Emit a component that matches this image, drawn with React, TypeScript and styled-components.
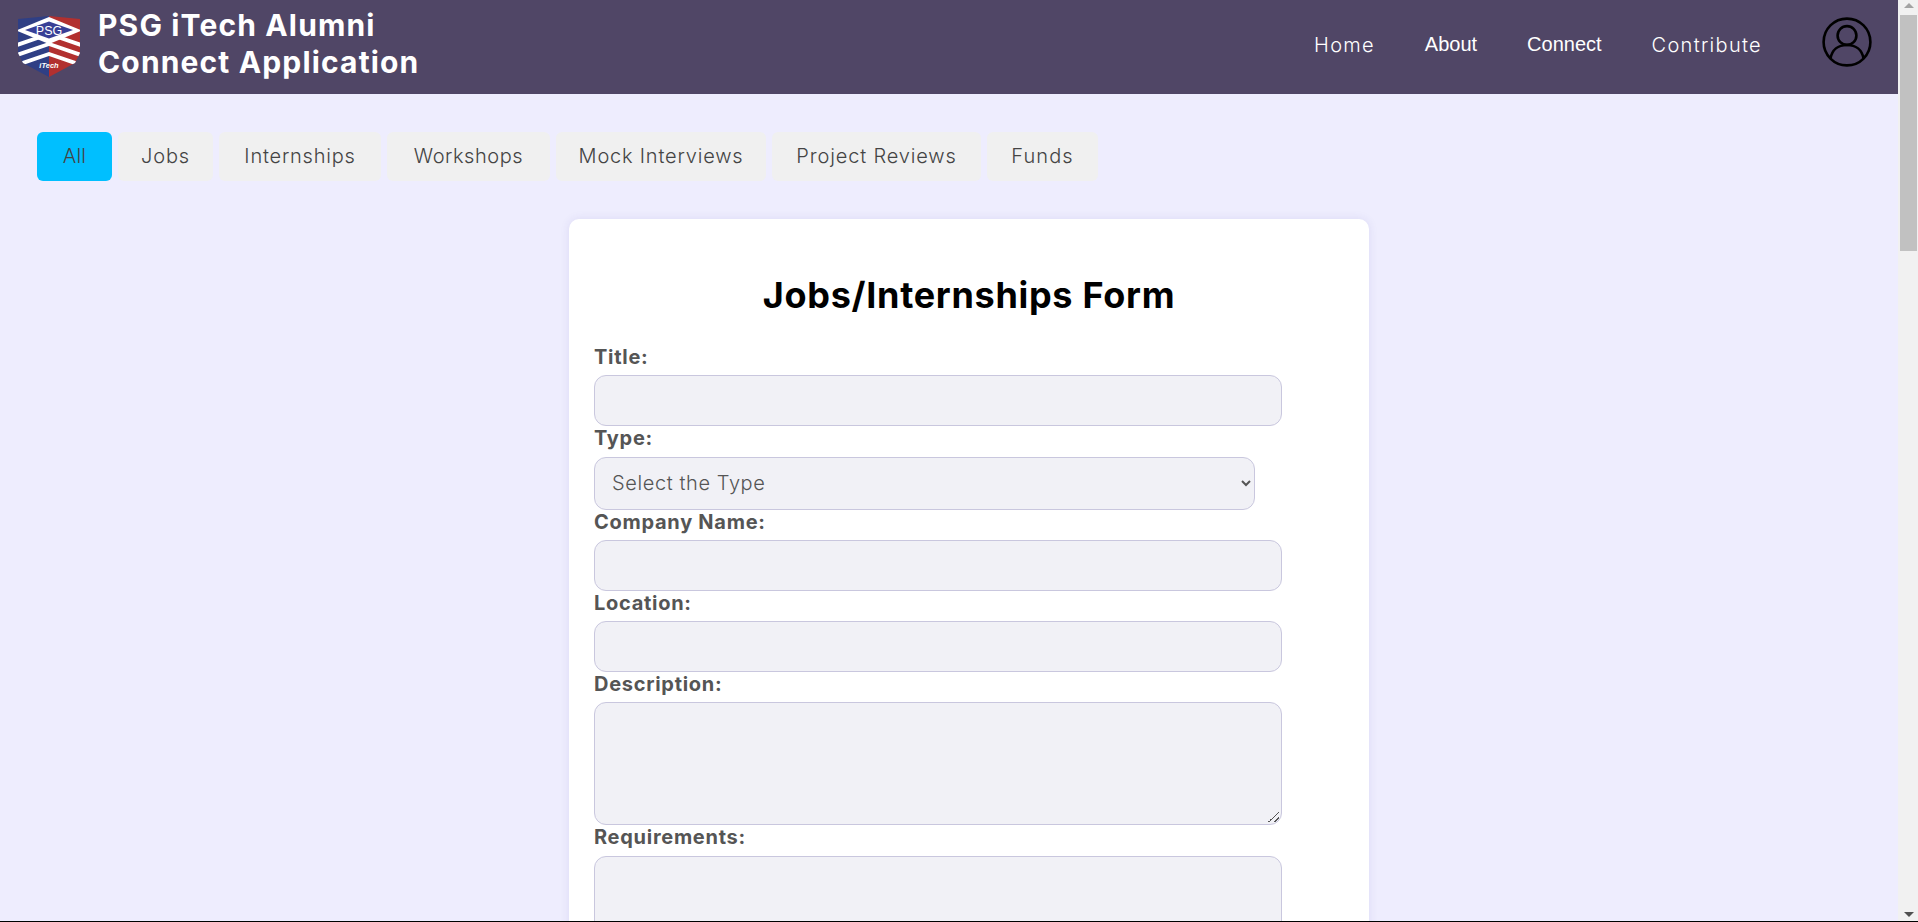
import React from "react";
import styled, { createGlobalStyle } from "styled-components";

const Global = createGlobalStyle`
  html, body { margin: 0; height: 100%; overflow: hidden; background: #000; }
  #root { height: 921px; }
  * { box-sizing: border-box; }
`;

const Shell = styled.div`
  height: 921px;
  display: flex;
  background: #eeedfe;
  font-family: Inter, "Liberation Sans", sans-serif;
`;

const Content = styled.div`
  flex: 1;
  min-width: 0;
  overflow: hidden;
`;

const Rail = styled.div`
  width: 20px;
  flex: none;
  display: flex;
  flex-direction: column;
  align-items: flex-end;
  background: #f1f1f1;
`;

const RailArrow = styled.div<{ $down?: boolean }>`
  width: 19px;
  height: 15px;
  flex: none;
  display: flex;
  justify-content: center;
  padding-top: ${(p) => (p.$down ? "6px" : "3px")};
  &::before {
    content: "";
    width: 0;
    height: 0;
    border-left: 5px solid transparent;
    border-right: 5px solid transparent;
    ${(p) =>
      p.$down
        ? "border-top: 5px solid #505050;"
        : "border-bottom: 5px solid #a3a3a3;"}
  }
`;

const RailThumb = styled.div`
  width: 17px;
  height: 236px;
  margin-right: 1px;
  background: #c1c1c1;
`;

const RailSpacer = styled.div`
  flex: 1;
`;

const Header = styled.header`
  height: 94px;
  background: #504666;
  display: flex;
  align-items: center;
  justify-content: space-between;
  padding: 0 26px 0 18px;
`;

const Brand = styled.div`
  display: flex;
  align-items: center;
  gap: 18px;
`;

const BrandTitle = styled.h1`
  margin: 0 0 6px;
  width: 340px;
  color: #fff;
  font-size: 30px;
  line-height: 37px;
  font-weight: 700;
  letter-spacing: 1.15px;
`;

const Nav = styled.nav`
  display: flex;
  align-items: center;
`;

const NavLink = styled.a`
  margin: 0 50px 5px 0;
  color: #fff;
  font: 400 20px "Liberation Sans", sans-serif;
  &:last-of-type { margin-right: 60px; }
`;

const WideNavLink = styled(NavLink)<{ $ls: number }>`
  font: 300 20px Inter, sans-serif;
  letter-spacing: ${(p) => p.$ls}px;
`;

const Avatar = styled.svg`
  display: block;
  width: 50px;
  height: 50px;
  margin-top: -10px;
`;

const Main = styled.main`
  padding: 38px 0 0;
`;

const Tabs = styled.div`
  display: flex;
  gap: 6px;
  padding-left: 37px;
`;

const Tab = styled.button<{ $active?: boolean; $w: number; $ls: number }>`
  height: 49px;
  padding: 0 0 2px;
  width: ${(p) => p.$w}px;
  border: 0;
  border-radius: 6px;
  background: ${(p) => (p.$active ? "#00bfff" : "#f0f0f0")};
  color: #444;
  font: 300 20px Inter, sans-serif;
  letter-spacing: ${(p) => p.$ls}px;
`;

const Card = styled.section`
  width: 800px;
  min-height: 1200px;
  margin: 38px 0 0 569px;
  padding: 54px 25px 0;
  background: #fff;
  border-radius: 10px;
  box-shadow: 0 0 10px rgba(60, 50, 160, 0.1);
`;

const Heading = styled.h2`
  margin: 0 0 28px;
  text-align: center;
  color: #000;
  font-size: 36px;
  line-height: 44px;
  font-weight: 700;
  letter-spacing: 0.7px;
`;

const Label = styled.label<{ $tall?: boolean }>`
  display: block;
  height: ${(p) => (p.$tall ? 31 : 30)}px;
  line-height: 24px;
  color: #555;
  font-size: 20px;
  font-weight: 700;
  letter-spacing: 0.72px;
`;

const fieldCss = `
  display: block;
  border: 1px solid #c9c7de;
  border-radius: 12px;
  background: #f1f1f6;
`;

const Input = styled.input`
  ${fieldCss}
  width: 688px;
  height: 51px;
`;

const Select = styled.select`
  ${fieldCss}
  width: 661px;
  height: 53px;
  margin-top: 1px;
  padding: 0 0 2px 13px;
  color: #555;
  font: 300 20px Inter, sans-serif;
  letter-spacing: 0.6px;
`;

const Area = styled.textarea`
  ${fieldCss}
  width: 688px;
  height: 123px;
  resize: vertical;
  &::-webkit-resizer {
    background: linear-gradient(135deg, transparent 0 50%, #555 50% 58%, transparent 58% 74%, #555 74% 82%, transparent 82%) no-repeat 2px 2px / 11px 11px;
  }
`;

const Logo = () => (
  <svg width="62" height="62" viewBox="0 0 62 62" aria-label="PSG iTech logo">
    <defs>
      <clipPath id="shield">
        <path d="M0 3 L31 0 L62 3 L62 37 L57 47 L31 61 L5 47 L0 37 Z" />
      </clipPath>
    </defs>
    <g clipPath="url(#shield)">
      <rect x="0" y="0" width="31" height="62" fill="#2f3f85" />
      <rect x="31" y="0" width="31" height="62" fill="#b2302f" />
      <path d="M-4 30 L31 18 L66 30 M-4 40 L31 28 L66 40 M-4 50 L31 38 L66 50" fill="none" stroke="#fff" strokeWidth="3.8" />
      <path d="M-2 14.5 L31 1 L64 14.5 L31 28 Z" fill="#fff" />
      <path d="M7 14 L31 5.5 L55 14 L31 22.5 Z" fill="#383f96" />
    </g>
    <text x="31" y="18.5" textAnchor="middle" fontFamily="Liberation Sans, sans-serif" fontSize="12.5" fill="#fff">PSG</text>
    <text x="31" y="52" textAnchor="middle" fontFamily="Liberation Sans, sans-serif" fontSize="7.5" fontStyle="italic" fontWeight="700" fill="#fff">iTech</text>
  </svg>
);

const tabs: [string, number, number][] = [
  ["All", 75, 0.2],
  ["Jobs", 95, 0.9],
  ["Internships", 162, 0.78],
  ["Workshops", 163, 0.55],
  ["Mock Interviews", 210, 0.8],
  ["Project Reviews", 209, 0.85],
  ["Funds", 111, 1.05],
];

export default function App() {
  return (
    <>
      <Global />
      <Shell>
        <Content>
          <Header>
            <Brand>
              <Logo />
              <BrandTitle>PSG iTech Alumni Connect Application</BrandTitle>
            </Brand>
            <Nav>
              <WideNavLink $ls={1.25}>Home</WideNavLink>
              <NavLink>About</NavLink>
              <NavLink>Connect</NavLink>
              <WideNavLink $ls={1.3}>Contribute</WideNavLink>
              <Avatar viewBox="0 0 50 50" fill="none" stroke="#000" strokeWidth="2.6">
                <circle cx="25" cy="25" r="23.4" />
                <circle cx="25" cy="18.5" r="9.4" />
                <path d="M8.5 41.5 C10 33 16 28 25 28 C34 28 40 33 41.5 41.5" />
              </Avatar>
            </Nav>
          </Header>
          <Main>
            <Tabs>
              {tabs.map(([name, w, ls], i) => (
                <Tab key={name} $active={i === 0} $w={w} $ls={ls}>{name}</Tab>
              ))}
            </Tabs>
            <Card>
              <Heading>Jobs/Internships Form</Heading>
              <Label>Title:</Label>
              <Input />
              <Label>Type:</Label>
              <Select defaultValue="">
                <option value="">Select the Type</option>
              </Select>
              <Label>Company Name:</Label>
              <Input />
              <Label>Location:</Label>
              <Input />
              <Label>Description:</Label>
              <Area />
              <Label $tall>Requirements:</Label>
              <Area />
            </Card>
          </Main>
        </Content>
        <Rail>
          <RailArrow />
          <RailThumb />
          <RailSpacer />
          <RailArrow $down />
        </Rail>
      </Shell>
    </>
  );
}
